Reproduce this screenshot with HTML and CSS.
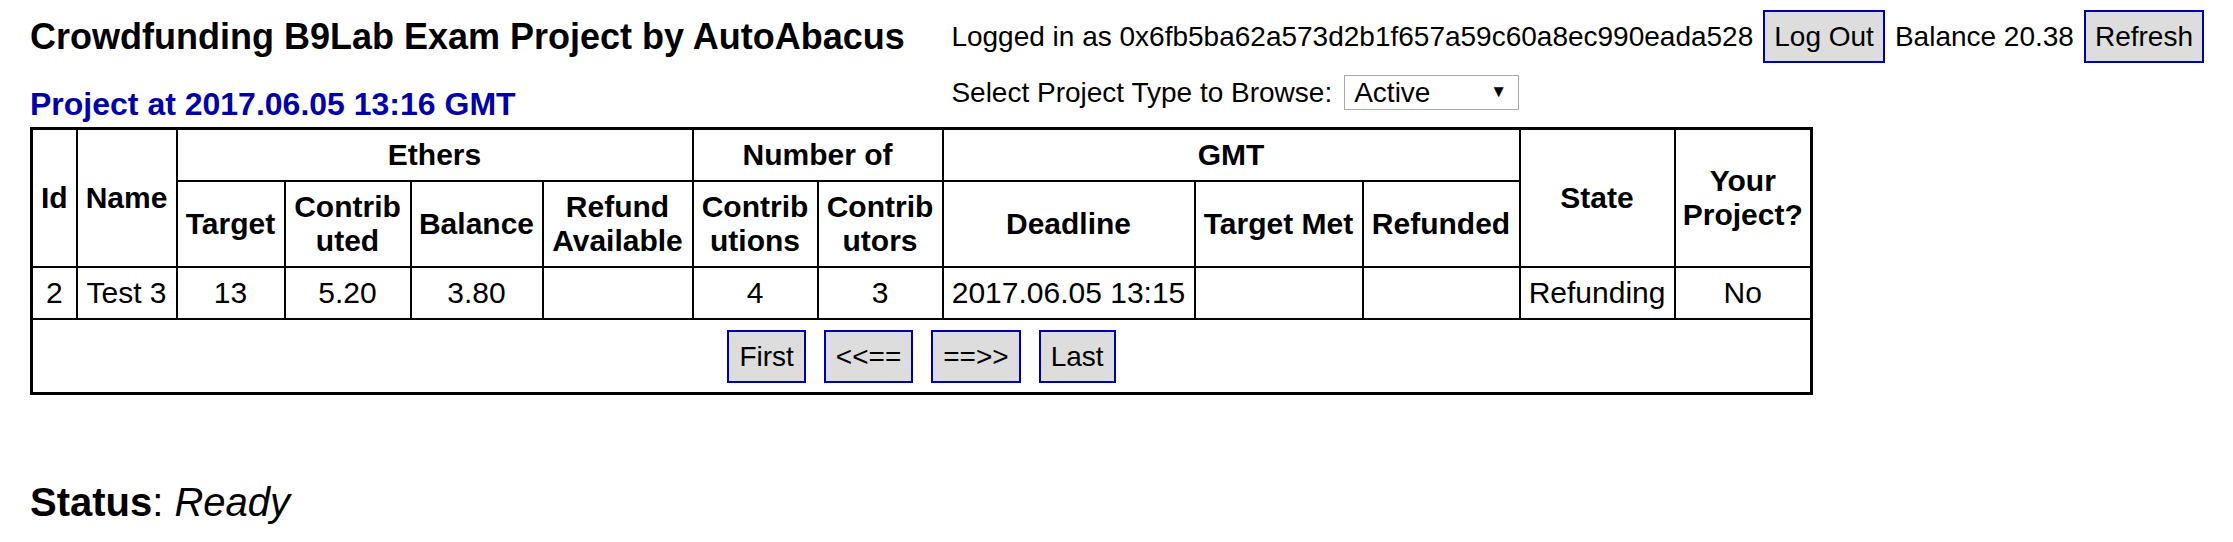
FILE: index.html
```html
<!DOCTYPE html>
<html>
<head>
<meta charset="utf-8">
<link rel="stylesheet" href="styles.css">
</head>
<body>
<div class="top">
  <div class="heads">
    <h1 class="title">Crowdfunding B9Lab Exam Project by AutoAbacus</h1>
    <h2 class="subtitle">Project at 2017.06.05 13:16 GMT</h2>
  </div>
  <div class="account">
    <div class="line">
      <span>Logged in as 0x6fb5ba62a573d2b1f657a59c60a8ec990eada528</span>
      <button class="btn">Log Out</button>
      <span>Balance 20.38</span>
      <button class="btn">Refresh</button>
    </div>
    <div class="line line2">
      <span>Select Project Type to Browse:</span>
      <span class="selwrap">
        <select class="sel"><option>Active</option></select>
        <span class="arrow">▼</span>
      </span>
    </div>
  </div>
</div>

<table class="grid">
  <colgroup>
    <col class="c-id"><col class="c-name"><col class="c-target"><col class="c-contrib"><col class="c-bal"><col class="c-refund"><col class="c-ctions"><col class="c-ctors"><col class="c-dead"><col class="c-met"><col class="c-refunded"><col class="c-state"><col class="c-yours">
  </colgroup>
  <thead>
    <tr class="h1row">
      <th rowspan="2">Id</th>
      <th rowspan="2">Name</th>
      <th colspan="4">Ethers</th>
      <th colspan="2">Number of</th>
      <th colspan="3">GMT</th>
      <th rowspan="2">State</th>
      <th rowspan="2">Your<br>Project?</th>
    </tr>
    <tr class="h2row">
      <th>Target</th>
      <th>Contrib<br>uted</th>
      <th>Balance</th>
      <th>Refund<br>Available</th>
      <th>Contrib<br>utions</th>
      <th>Contrib<br>utors</th>
      <th>Deadline</th>
      <th>Target Met</th>
      <th>Refunded</th>
    </tr>
  </thead>
  <tbody>
    <tr class="drow">
      <td>2</td>
      <td>Test 3</td>
      <td>13</td>
      <td>5.20</td>
      <td>3.80</td>
      <td></td>
      <td>4</td>
      <td>3</td>
      <td>2017.06.05 13:15</td>
      <td></td>
      <td></td>
      <td>Refunding</td>
      <td>No</td>
    </tr>
    <tr class="navrow">
      <td colspan="13">
        <div class="nav">
          <button class="btn">First</button>
          <button class="btn">&lt;&lt;==</button>
          <button class="btn">==&gt;&gt;</button>
          <button class="btn">Last</button>
        </div>
      </td>
    </tr>
  </tbody>
</table>

<p class="status"><b>Status</b>: <i>Ready</i></p>
</body>
</html>
```
FILE: styles.css
```css
html, body {
  margin: 0;
  background: #fff;
}
body {
  padding: 10px 29px 0 30px;
  font-family: "Liberation Sans", Arial, sans-serif;
  font-size: 28px;
  color: #000;
}
.top {
  display: flex;
  justify-content: space-between;
  align-items: flex-start;
}
.heads {
  display: flex;
  flex-direction: column;
}
.title {
  margin: 6px 0 0 0;
  font-size: 36px;
  line-height: 42px;
  font-weight: bold;
}
.subtitle {
  margin: 28px 0 0 0;
  font-size: 32px;
  line-height: 36px;
  font-weight: bold;
  color: #0000a8;
}
.account {
  display: flex;
  flex-direction: column;
}
.line {
  display: flex;
  align-items: center;
  gap: 10px;
  line-height: 32px;
}
.line2 {
  margin-top: 12px;
  gap: 12px;
}
.btn {
  height: 53px;
  padding: 0 9px;
  border: 2px solid #0000aa;
  background: #dddddd;
  font-family: "Liberation Sans", Arial, sans-serif;
  font-size: 28px;
  color: #000;
  margin: 0;
}
.selwrap {
  position: relative;
  display: inline-block;
}
.sel {
  appearance: none;
  -webkit-appearance: none;
  width: 175px;
  height: 35px;
  margin: 0;
  padding: 0 0 0 9px;
  border: 1px solid #a9a9a9;
  border-radius: 0;
  background: #fff;
  font-family: "Liberation Sans", Arial, sans-serif;
  font-size: 28px;
  color: #000;
  display: block;
}
.arrow {
  position: absolute;
  right: 12px;
  top: 7px;
  font-size: 17px;
  line-height: 20px;
  pointer-events: none;
}
.grid {
  margin-top: 5px;
  border-collapse: collapse;
  table-layout: fixed;
  width: 1780px;
  border: 3px solid #000;
  font-size: 30px;
  line-height: 34px;
}
.grid th, .grid td {
  border: 2px solid #000;
  padding: 8px 6px;
  text-align: center;
  vertical-align: middle;
}
.grid th {
  font-weight: bold;
}
.c-id { width: 45px; }
.c-name { width: 100px; }
.c-target { width: 108px; }
.c-contrib { width: 126px; }
.c-bal { width: 132px; }
.c-refund { width: 150px; }
.c-ctions { width: 125px; }
.c-ctors { width: 125px; }
.c-dead { width: 252px; }
.c-met { width: 168px; }
.c-refunded { width: 157px; }
.c-state { width: 155px; }
.c-yours { width: 137px; }
.grid .navrow td {
  padding: 10px 6px 9px;
}
.nav {
  display: flex;
  justify-content: center;
  gap: 18px;
}
.nav .btn {
  padding: 0 10px;
}
.status {
  margin: 84px 0 0 0;
  font-size: 40px;
  line-height: 46px;
}
```
